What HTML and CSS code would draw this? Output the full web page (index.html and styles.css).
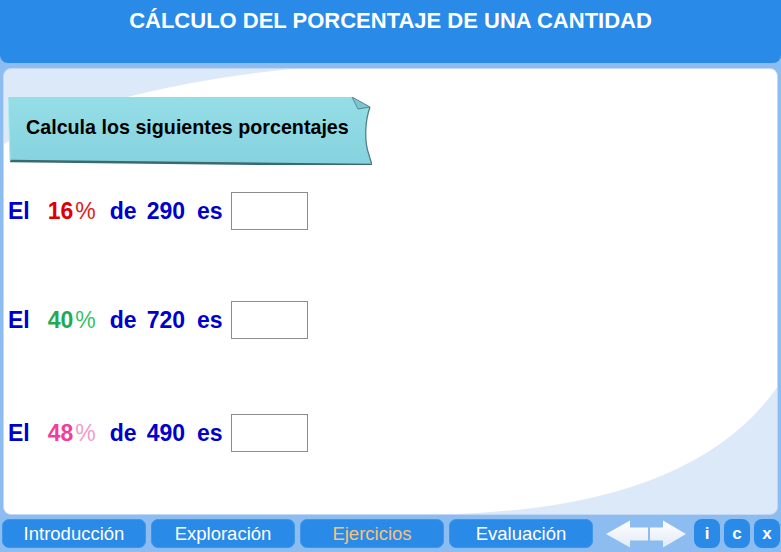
FILE: index.html
```html
<!DOCTYPE html>
<html lang="es">
<head>
<meta charset="utf-8">
<title>Cálculo del porcentaje de una cantidad</title>
<link rel="stylesheet" href="styles.css">
</head>
<body>
<div class="app">
  <header class="header"><h1>CÁLCULO DEL PORCENTAJE DE UNA CANTIDAD</h1></header>
  <main class="panel">
    <div class="banner"><span>Calcula los siguientes porcentajes</span></div>
    <div class="rows">
      <div class="row">
        <span class="w el">El</span>
        <span class="w pct red"><span class="n">16</span><span class="p">%</span></span>
        <span class="w de">de</span>
        <span class="w num">290</span>
        <span class="w es">es</span>
        <input class="answer" type="text" aria-label="respuesta 1">
      </div>
      <div class="row row2">
        <span class="w el">El</span>
        <span class="w pct green"><span class="n">40</span><span class="p">%</span></span>
        <span class="w de">de</span>
        <span class="w num">720</span>
        <span class="w es">es</span>
        <input class="answer" type="text" aria-label="respuesta 2">
      </div>
      <div class="row row3">
        <span class="w el">El</span>
        <span class="w pct pink"><span class="n">48</span><span class="p">%</span></span>
        <span class="w de">de</span>
        <span class="w num">490</span>
        <span class="w es">es</span>
        <input class="answer" type="text" aria-label="respuesta 3">
      </div>
    </div>
  </main>
  <nav class="nav">
    <div class="tabs">
      <div class="tab">Introducción</div>
      <div class="tab">Exploración</div>
      <div class="tab active">Ejercicios</div>
      <div class="tab">Evaluación</div>
    </div>
    <svg class="arrows" width="82" height="29" viewBox="0 0 82 29">
      <defs>
        <linearGradient id="ag" x1="0" y1="0" x2="0" y2="1">
          <stop offset="0" stop-color="#ffffff"/>
          <stop offset="1" stop-color="#e2eaf5"/>
        </linearGradient>
      </defs>
      <path d="M1 15 L25 1.5 L25 8.5 L43 8.5 L43 21.5 L25 21.5 L25 28.5 Z" fill="url(#ag)"/>
      <path d="M81 15 L58 1.5 L58 8.5 L45 8.5 L45 21.5 L58 21.5 L58 28.5 Z" fill="url(#ag)"/>
    </svg>
    <div class="tools">
      <div class="sq">i</div>
      <div class="sq">c</div>
      <div class="sq">x</div>
    </div>
  </nav>
</div>
</body>
</html>
```
FILE: styles.css
```css
* { box-sizing: border-box; }
html, body { margin: 0; padding: 0; }
body {
  width: 781px;
  height: 552px;
  overflow: hidden;
  background: #8cbcf0;
  font-family: "Liberation Sans", Arial, sans-serif;
}
.app {
  display: flex;
  flex-direction: column;
  height: 552px;
}
.header {
  height: 63px;
  background: #2a8ae8;
  border-radius: 0 0 8px 8px;
  text-align: center;
  padding-top: 8px;
}
.header h1 {
  margin: 0;
  font-size: 22px;
  line-height: 25px;
  font-weight: bold;
  color: #ffffff;
}
.panel {
  margin: 5px 3px 0;
  height: 447px;
  border-radius: 8px;
  border: 1px solid #c2d8f4;
  background-color: #dbe9f8;
  background-image: url("data:image/svg+xml,%3Csvg xmlns='http://www.w3.org/2000/svg' viewBox='0 0 775 447' preserveAspectRatio='none'%3E%3Cpath d='M287 0H775V320Q690 440 450 447H0V75Q100 20 287 0Z' fill='%23ffffff'/%3E%3C/svg%3E");
  background-size: 100% 100%;
  background-repeat: no-repeat;
  padding: 28px 0 0 4px;
  display: flex;
  flex-direction: column;
  align-items: flex-start;
}
.banner {
  width: 364px;
  height: 68px;
  background-image: url("data:image/svg+xml,%3Csvg xmlns='http://www.w3.org/2000/svg' viewBox='0 0 364 68' preserveAspectRatio='none'%3E%3Cdefs%3E%3ClinearGradient id='g' x1='0' y1='0' x2='0' y2='1'%3E%3Cstop offset='0' stop-color='%2396dee7'/%3E%3Cstop offset='1' stop-color='%2385d2de'/%3E%3C/linearGradient%3E%3C/defs%3E%3Cpath d='M0 0 L344 0 L362 10 C357 24 356 44 361 58 L364 68 L2 64 Z' fill='url(%23g)'/%3E%3Cpath d='M2 64 L364 68' stroke='%23396a70' stroke-width='2.5' fill='none'/%3E%3Cpath d='M344 0 L362 10 L350 12 Z' fill='%237cc6d0' stroke='%23508a90' stroke-width='1'/%3E%3Cpath d='M362 10 C357 24 356 44 361 58 L364 68' fill='none' stroke='%23507f86' stroke-width='1.3'/%3E%3Cpath d='M0 0 L2 64' fill='none' stroke='%23b9eaf0' stroke-width='1'/%3E%3C/svg%3E");
  background-size: 100% 100%;
  background-repeat: no-repeat;
  display: flex;
  align-items: center;
  padding: 0 0 7px 18px;
  font-size: 19.7px;
  font-weight: bold;
  color: #000000;
}
.rows {
  margin-top: 27px;
  display: flex;
  flex-direction: column;
}
.row {
  display: flex;
  align-items: center;
  height: 38px;
}
.row2 { margin-top: 71px; }
.row3 { margin-top: 75px; }
.w {
  font-size: 23px;
  font-weight: bold;
  line-height: 38px;
  color: #0000cc;
}
.pct { margin-left: 18px; }
.pct .p { margin-left: 2px; font-weight: normal; }
.de { margin-left: 14px; }
.num { margin-left: 10px; }
.es { margin-left: 12px; }
.red .n { color: #dd0000; }
.red .p { color: #e01a1a; }
.green .n { color: #1faa55; }
.green .p { color: #3cbf6a; }
.pink .n { color: #ee3f9c; }
.pink .p { color: #f29ccb; }
.answer {
  margin: 0 0 0 8px;
  width: 77px;
  height: 38px;
  padding: 0;
  border: 1px solid #8c8c8c;
  background: #ffffff;
  outline: none;
}
.nav {
  height: 37px;
  display: flex;
  align-items: flex-start;
  padding: 4px 0 0 2px;
}
.tabs {
  display: flex;
  gap: 5px;
}
.tab {
  width: 144px;
  height: 29px;
  border-radius: 7px;
  background: #2a8ae8;
  border: 1px solid #3f95e8;
  color: #ffffff;
  font-size: 18.5px;
  display: flex;
  align-items: center;
  justify-content: center;
}
.tab.active { color: #f6c27c; }
.arrows {
  margin-left: 12px;
  display: block;
}
.tools {
  margin-left: 7px;
  display: flex;
  gap: 4px;
}
.sq {
  width: 26px;
  height: 29px;
  border-radius: 8px;
  background: #2a8ae8;
  color: #ffffff;
  font-size: 17px;
  font-weight: bold;
  display: flex;
  align-items: center;
  justify-content: center;
}
```
